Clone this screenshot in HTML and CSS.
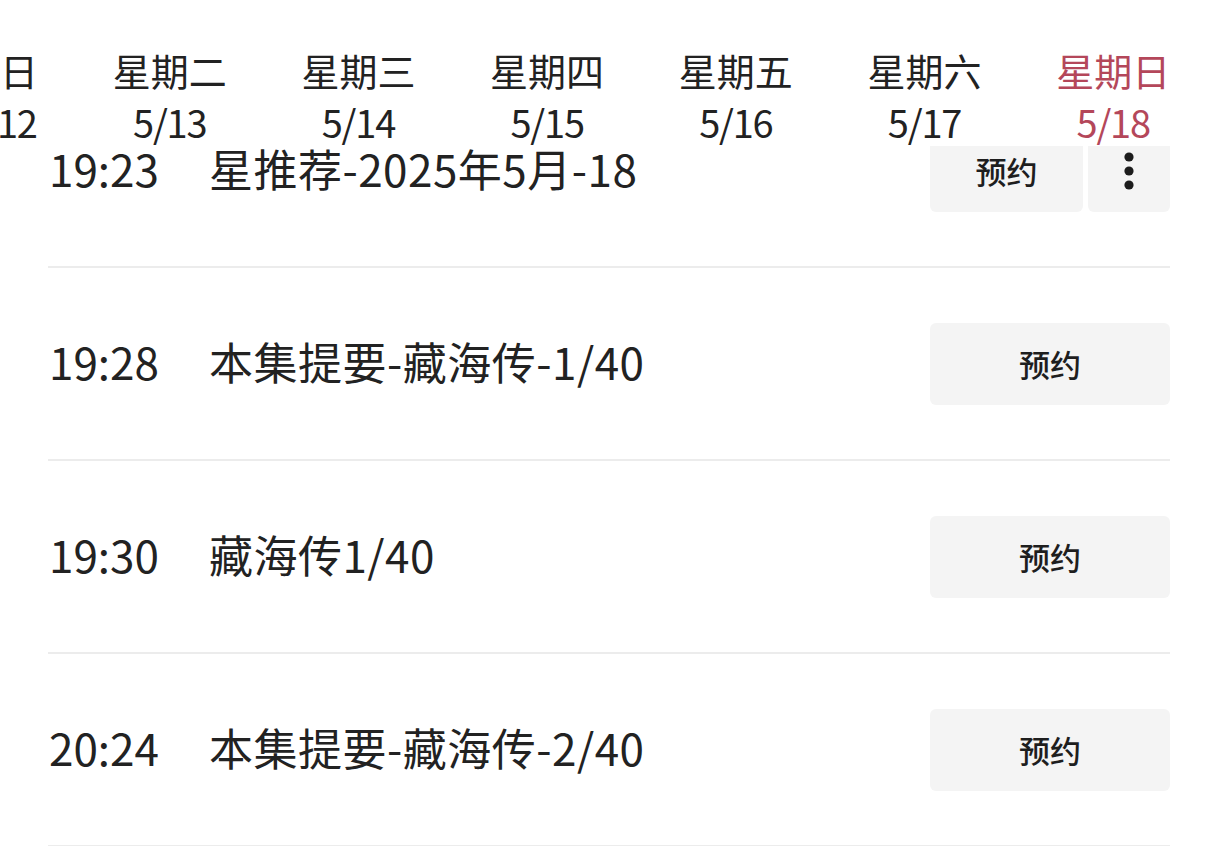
FILE: index.html
```html
<!DOCTYPE html>
<html lang="zh-CN">
<head>
<meta charset="utf-8">
<title>节目单</title>
<link rel="stylesheet" href="styles.css">
</head>
<body>
<div class="page">
  <header class="week">
    <div class="day"><span class="name">今日</span><span class="date">5/12</span></div>
    <div class="day"><span class="name">星期二</span><span class="date">5/13</span></div>
    <div class="day"><span class="name">星期三</span><span class="date">5/14</span></div>
    <div class="day"><span class="name">星期四</span><span class="date">5/15</span></div>
    <div class="day"><span class="name">星期五</span><span class="date">5/16</span></div>
    <div class="day"><span class="name">星期六</span><span class="date">5/17</span></div>
    <div class="day active"><span class="name">星期日</span><span class="date">5/18</span></div>
  </header>
  <ul class="list">
    <li class="row">
      <span class="time">19:23</span>
      <span class="title">星推荐-2025年5月-18</span>
      <div class="actions">
        <button class="btn btn-narrow">预约</button>
        <button class="btn btn-more" aria-label="更多">
          <svg width="12" height="40" viewBox="0 0 12 40"><circle cx="6" cy="6" r="4.6" fill="#1c1c1c"/><circle cx="6" cy="20" r="4.6" fill="#1c1c1c"/><circle cx="6" cy="34" r="4.6" fill="#1c1c1c"/></svg>
        </button>
      </div>
    </li>
    <li class="row">
      <span class="time">19:28</span>
      <span class="title">本集提要-藏海传-1/40</span>
      <div class="actions"><button class="btn">预约</button></div>
    </li>
    <li class="row">
      <span class="time">19:30</span>
      <span class="title">藏海传1/40</span>
      <div class="actions"><button class="btn">预约</button></div>
    </li>
    <li class="row">
      <span class="time">20:24</span>
      <span class="title">本集提要-藏海传-2/40</span>
      <div class="actions"><button class="btn">预约</button></div>
    </li>
  </ul>
</div>
</body>
</html>
```

FILE: styles.css
```css
html, body {
  margin: 0;
  padding: 0;
  background: #ffffff;
}
body {
  width: 1220px;
  height: 846px;
  overflow: hidden;
  font-family: "Noto Sans CJK SC", "Noto Sans", sans-serif;
  color: #222222;
}
.page {
  position: relative;
  width: 1220px;
  height: 846px;
  overflow: hidden;
}
.week {
  position: absolute;
  top: 0;
  left: -38px;
  height: 146px;
  display: flex;
  gap: 74.7px;
  background: #ffffff;
  z-index: 2;
  white-space: nowrap;
}
.day {
  display: flex;
  flex-direction: column;
  align-items: center;
  padding-top: 49px;
}
.name {
  font-size: 38px;
  line-height: 42px;
}
.date {
  font-size: 38px;
  line-height: 42px;
  margin-top: 10px;
  letter-spacing: -1.2px;
}
.day.active {
  color: #b4475a;
}
.list {
  list-style: none;
  margin: 0;
  padding: 75px 0 0 0;
}
.row {
  display: flex;
  align-items: center;
  height: 191px;
  margin: 0 50px 0 48px;
  border-bottom: 2px solid #ececec;
}
.time {
  font-size: 44px;
  line-height: 52px;
  padding-left: 1px;
  margin-right: 50px;
  margin-top: -6px;
  flex: none;
}
.title {
  font-size: 44px;
  line-height: 52px;
  flex: 1;
  white-space: nowrap;
  letter-spacing: 0.5px;
  margin-top: -6px;
}
.actions {
  display: flex;
  gap: 5px;
}
.btn {
  width: 240px;
  height: 82px;
  border: none;
  border-radius: 6px;
  background: #f4f4f4;
  font-family: "Noto Sans CJK SC", sans-serif;
  font-size: 31px;
  font-weight: 500;
  color: #1e1e1e;
  padding: 0;
  display: flex;
  align-items: center;
  justify-content: center;
}
.btn-narrow {
  width: 153px;
}
.btn-more {
  width: 82px;
}
```
